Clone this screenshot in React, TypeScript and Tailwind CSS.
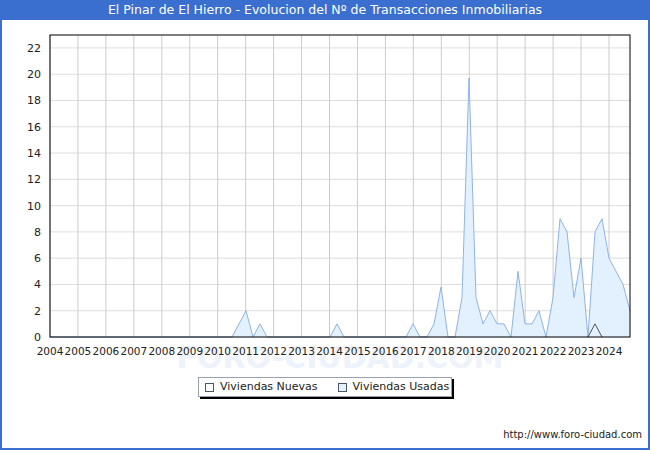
const USED: [number, number][] = [
  [50, 0], [232, 0], [246, 2], [253, 0], [260, 1], [267, 0], [330, 0], [337, 1], [344, 0],
  [406, 0], [413, 1], [420, 0], [427, 0], [434, 1], [441, 3.8], [448, 0], [455, 0], [462, 3],
  [469, 19.7], [476, 3], [483, 1], [490, 2], [497, 1], [504, 1], [511, 0], [518, 5], [525, 1],
  [532, 1], [539, 2], [546, 0], [553, 3], [560, 9], [567, 8], [574, 3], [581, 6], [588, 0],
  [595, 8], [602, 9], [609, 6], [616, 5], [623, 4], [630, 2],
]
const NEW: [number, number][] = [[588, 0], [595, 1], [602, 0]]

const Y0 = 337
const UNIT = 13.14
const yOf = (v: number) => Y0 - v * UNIT
const years = Array.from({ length: 21 }, (_, i) => 2004 + i)
const xOf = (i: number) => 50 + i * 27.95

function area(pts: [number, number][]) {
  const line = pts.map(([x, v]) => `${x},${yOf(v)}`).join(" ")
  return { line, poly: `${pts[0][0]},${Y0} ${line} ${pts[pts.length - 1][0]},${Y0}` }
}

export default function App() {
  const u = area(USED)
  const n = area(NEW)
  return (
    <div className="relative w-[650px] h-[450px] bg-white border-2 border-[#3a6fd0] border-t-0 flex flex-col" style={{ fontFamily: "'DejaVu Sans', sans-serif" }}>
      <div className="h-[20px] bg-[#3a6fd0] text-white text-[12.5px] flex items-center justify-center shrink-0">
        El Pinar de El Hierro - Evolucion del Nº de Transacciones Inmobiliarias
      </div>
      <svg width="650" height="450" className="absolute left-[-2px] top-0" viewBox="0 0 650 450">
        <text x="340" y="368" fontSize="30" fill="#eef2fb" textAnchor="middle" fontWeight="bold">FORO-CIUDAD.COM</text>
        {Array.from({ length: 12 }, (_, i) => (
          <line key={i} x1="50" x2="630" y1={yOf(i * 2)} y2={yOf(i * 2)} stroke="#dddddd" />
        ))}
        {years.map((_, i) => (
          <line key={i} x1={xOf(i)} x2={xOf(i)} y1="35" y2={Y0} stroke="#cccccc" />
        ))}
        <polygon points={u.poly} fill="#e3f0fd" />
        <polyline points={u.line} fill="none" stroke="#8fb3ec" strokeWidth="1" />
        <polyline points={n.line} fill="none" stroke="#555" strokeWidth="1" />
        <rect x="50" y="35" width="580" height={Y0 - 35} fill="none" stroke="#000" />
        {Array.from({ length: 12 }, (_, i) => (
          <text key={i} x="41" y={yOf(i * 2) + 4} fontSize="11" textAnchor="end" fill="#222">{i * 2}</text>
        ))}
        {years.map((y, i) => (
          <text key={y} x={xOf(i)} y="355" fontSize="10.5" textAnchor="middle" fill="#222">{y}</text>
        ))}
      </svg>
      <div className="absolute left-[196px] top-[377px] w-[254px] h-[20px] border border-gray-400 shadow-[2px_2px_0_#000] bg-white flex items-center whitespace-nowrap text-[11px] text-[#222] px-[6px] gap-[6px]">
        <span className="w-[9px] h-[9px] border border-gray-600 bg-white shrink-0" />
        <span>Viviendas Nuevas</span>
        <span className="w-[9px] h-[9px] border border-gray-600 bg-[#e3f0fd] ml-[14px] shrink-0" />
        <span>Viviendas Usadas</span>
      </div>
      <div className="absolute right-[6px] top-[427px] text-[10px] text-[#222]">http://www.foro-ciudad.com</div>
    </div>
  )
}
